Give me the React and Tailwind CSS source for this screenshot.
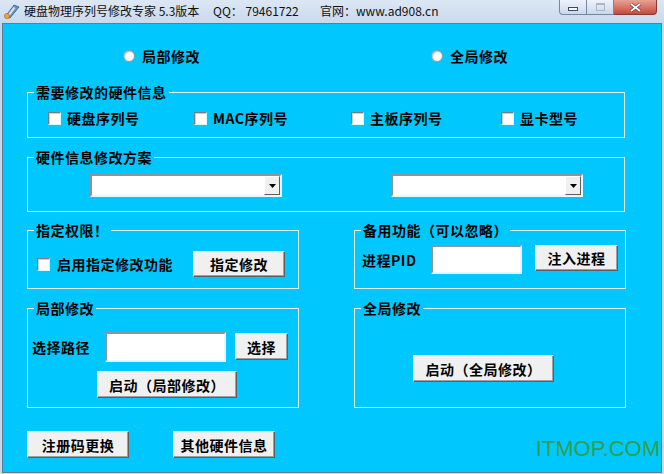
import React from "react";

const label = "text-[14px] leading-[16px] font-bold tracking-[0.5px] whitespace-nowrap";

const GroupBox = ({ title, className, children }) => (
  <div className={`relative border border-[#e2f5fc] ${className}`}>
    <span className={`absolute -top-[9px] left-[6px] px-[2px] bg-[#00c8ff] ${label}`}>
      {title}
    </span>
    {children}
  </div>
);

const Btn = ({ className, children }) => (
  <button
    type="button"
    className={`flex items-center justify-center bg-[#f0f0f0] border border-t-white border-l-white border-r-[#5e5e5e] border-b-[#5e5e5e] shadow-[inset_-1px_-1px_0_#a0a0a0] text-black ${label} ${className}`}
  >
    {children}
  </button>
);

const Field = ({ className }) => (
  <input
    type="text"
    readOnly
    className={`bg-white border-2 border-t-[#8a969c] border-l-[#8a969c] border-r-[#e6f6fb] border-b-[#e6f6fb] outline-none ${className}`}
  />
);

const Check = () => (
  <span className="w-[13px] h-[13px] shrink-0 bg-white border border-t-[#6f7f88] border-l-[#6f7f88] border-r-[#dff3fa] border-b-[#dff3fa] shadow-[inset_1px_1px_0_#c8ced2]" />
);

const Radio = () => (
  <span className="w-[12px] h-[12px] shrink-0 rounded-full bg-white border border-[#8c9aa3] shadow-[inset_1px_1px_1px_#b8c2c8]" />
);

const Combo = () => (
  <div className="flex justify-end w-[192px] h-[23px] bg-white border-2 border-t-[#8a969c] border-l-[#8a969c] border-r-[#e6f6fb] border-b-[#e6f6fb]">
    <div className="w-[16px] h-full flex items-center justify-center bg-[#f0f0f0] border border-t-white border-l-white border-r-[#5e5e5e] border-b-[#5e5e5e]">
      <svg width="7" height="4" viewBox="0 0 7 4">
        <path d="M0 0h7L3.5 4z" fill="#000" />
      </svg>
    </div>
  </div>
);

const TitleBar = () => (
  <div className="flex items-start justify-between h-[23px] bg-linear-to-b from-[#dce7f4] to-[#c9d9ec]">
    <div className="flex items-center h-[22px] text-[12px] text-[#111] whitespace-pre">
      <svg className="ml-[3px]" width="18" height="18" viewBox="0 0 18 18">
        <path d="M2 15 L11 3 L16 5 L7 16 Z" fill="#6d8fc7" stroke="#3b5b94" strokeWidth="0.8" />
        <path d="M4 13.5 L10.5 5 L12.5 6 L6 14.5 Z" fill="#d3e0f5" />
        <circle cx="4" cy="14" r="2.6" fill="#e9a53a" stroke="#a8681c" strokeWidth="0.6" />
      </svg>
      <span className="ml-[3px] w-[189px]">硬盘物理序列号修改专家 5.3版本</span>
      <span className="w-[107px]">QQ： 79461722</span>
      <span>官网：www.ad908.cn</span>
    </div>
    <div className="flex mr-[7px]">
      <div className="w-[28px] h-[15px] flex items-center justify-center rounded-bl-[4px] border border-t-0 border-[#7488a6] bg-linear-to-b from-[#eef3fa] to-[#cbd8ea]">
        <span className="w-[10px] h-[4px] mt-[3px] bg-white border border-[#3b4b5e]" />
      </div>
      <div className="w-[27px] h-[15px] flex items-center justify-center border border-t-0 border-l-0 border-[#7488a6] bg-linear-to-b from-[#eef3fa] to-[#cbd8ea]">
        <span className="w-[9px] h-[8px] border border-[#a9b6c8] border-t-2" />
      </div>
      <div className="w-[43px] h-[15px] flex items-center justify-center rounded-br-[4px] border border-t-0 border-l-0 border-[#8a3a34] bg-linear-to-b from-[#e7a296] to-[#c4483c]">
        <svg width="11" height="9" viewBox="0 0 11 9">
          <path d="M1 1 L10 8 M10 1 L1 8" stroke="#5a2a26" strokeWidth="3" />
          <path d="M1 1 L10 8 M10 1 L1 8" stroke="#fff" strokeWidth="1.8" />
        </svg>
      </div>
    </div>
  </div>
);

export default function App() {
  return (
    <div className="w-[664px] h-[474px] overflow-hidden flex flex-col bg-[#c8d8eb] font-['Noto_Sans_CJK_SC',sans-serif]">
      <TitleBar />
      <div className="relative ml-[2px] w-[660px] h-[450px] border border-[#5f7c99] bg-[#00c8ff] pl-[24px] text-black">
        <div className="flex items-center mt-[24px] h-[16px] pl-[96px]">
          <div className="flex items-center gap-[7px] w-[308px]">
            <Radio />
            <span className={label}>局部修改</span>
          </div>
          <div className="flex items-center gap-[7px]">
            <Radio />
            <span className={label}>全局修改</span>
          </div>
        </div>

        <GroupBox title="需要修改的硬件信息" className="mt-[28px] w-[598px] h-[46px]">
          <div className="grid grid-cols-[146px_157px_150px_1fr] items-center mt-[17px] h-[14px] pl-[20px]">
            {["硬盘序列号", "MAC序列号", "主板序列号", "显卡型号"].map((t) => (
              <div key={t} className="flex items-center gap-[6px]">
                <Check />
                <span className={label}>{t}</span>
              </div>
            ))}
          </div>
        </GroupBox>

        <GroupBox title="硬件信息修改方案" className="mt-[19px] w-[598px] h-[55px]">
          <div className="flex gap-[109px] pt-[16px] pl-[62px]">
            <Combo />
            <Combo />
          </div>
        </GroupBox>

        <div className="flex gap-[55px] mt-[18px]">
          <GroupBox title="指定权限！" className="w-[272px] h-[59px]">
            <div className="flex items-center pt-[20px] pl-[9px]">
              <Check />
              <span className={`ml-[7px] w-[118px] ${label}`}>启用指定修改功能</span>
              <Btn className="ml-[18px] w-[92px] h-[26px]">指定修改</Btn>
            </div>
          </GroupBox>
          <GroupBox title="备用功能（可以忽略）" className="w-[272px] h-[59px]">
            <div className="flex items-start pt-[14px] pl-[7px]">
              <span className={`flex items-center w-[69px] h-[29px] ${label}`}>进程PID</span>
              <Field className="w-[91px] h-[29px]" />
              <Btn className="ml-[13px] w-[83px] h-[26px]">注入进程</Btn>
            </div>
          </GroupBox>
        </div>

        <div className="flex gap-[55px] mt-[19px]">
          <GroupBox title="局部修改" className="w-[272px] h-[100px]">
            <div className="flex items-start pt-[23px] pl-[4px]">
              <span className={`flex items-center w-[73px] h-[30px] ${label}`}>选择路径</span>
              <Field className="w-[121px] h-[30px]" />
              <Btn className="ml-[9px] mt-[1px] w-[53px] h-[27px]">选择</Btn>
            </div>
            <Btn className="ml-[69px] mt-[9px] w-[140px] h-[27px]">启动（局部修改）</Btn>
          </GroupBox>
          <GroupBox title="全局修改" className="w-[272px] h-[100px]">
            <Btn className="ml-[58px] mt-[46px] w-[141px] h-[27px]">启动（全局修改）</Btn>
          </GroupBox>
        </div>

        <div className="flex gap-[44px] mt-[23px]">
          <Btn className="w-[102px] h-[27px]">注册码更换</Btn>
          <Btn className="w-[102px] h-[27px]">其他硬件信息</Btn>
        </div>

        <span className="absolute right-[1px] bottom-[12px] text-[22px] leading-none text-[#2f9e4c] font-['Liberation_Sans',Arial,sans-serif]">
          ITMOP.COM
        </span>
      </div>
    </div>
  );
}
